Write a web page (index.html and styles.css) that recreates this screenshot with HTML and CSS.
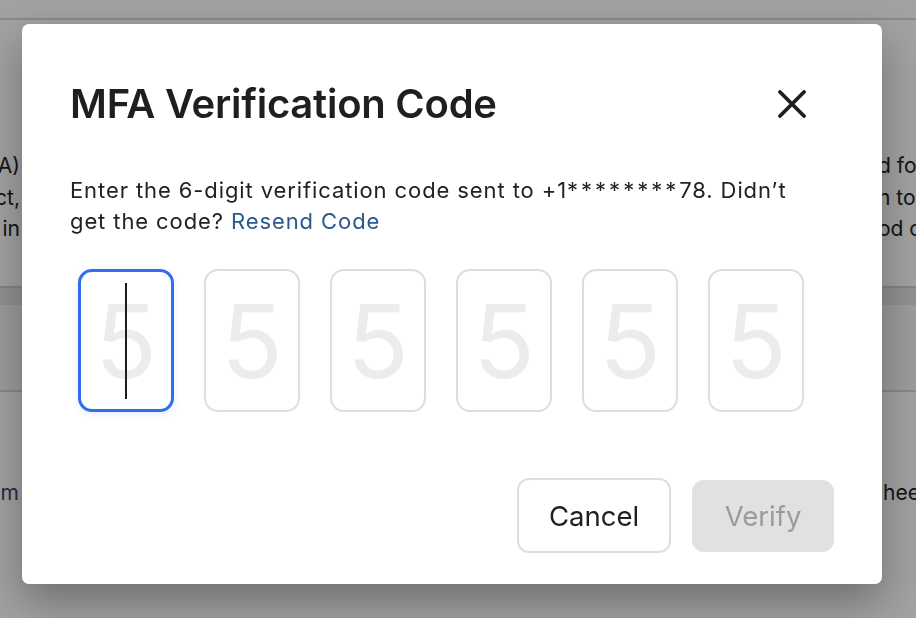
FILE: index.html
```html
<!DOCTYPE html>
<html lang="en">
<head>
<meta charset="utf-8">
<title>MFA Verification Code</title>
<link rel="stylesheet" href="styles.css">
</head>
<body>
<div class="page">
  <div class="bg-top"></div>
  <div class="bg-para">
    <div class="bg-line"><span class="bg-l">authentication (MFA)</span><span class="bg-r">d for</span></div>
    <div class="bg-line"><span class="bg-l">your account, product,</span><span class="bg-r">n to</span></div>
    <div class="bg-line"><span class="bg-l">sign in</span><span class="bg-r">od c</span></div>
  </div>
  <div class="bg-band"></div>
  <div class="bg-section"></div>
  <div class="bg-line bg-lower"><span class="bg-l bg-link">Learn more about the system</span><span class="bg-r">hee</span></div>
</div>

<div class="overlay">
  <div class="modal" role="dialog" aria-labelledby="mfa-title">
    <div class="modal-header">
      <h2 class="modal-title" id="mfa-title">MFA Verification Code</h2>
      <button class="close-btn" aria-label="Close">
        <svg width="28" height="28" viewBox="0 0 28 28" aria-hidden="true">
          <path d="M2 2 L26 26 M26 2 L2 26" stroke="#1f1f1f" stroke-width="3.8" stroke-linecap="round" fill="none"/>
        </svg>
      </button>
    </div>
    <p class="modal-text">Enter the 6-digit verification code sent to +1<span class="masked">********</span>78. Didn’t get the code? <a class="resend" href="#">Resend Code</a></p>
    <div class="code-row">
      <div class="code-box focused"><span class="ph">5</span><span class="caret"></span></div>
      <div class="code-box"><span class="ph">5</span></div>
      <div class="code-box"><span class="ph">5</span></div>
      <div class="code-box"><span class="ph">5</span></div>
      <div class="code-box"><span class="ph">5</span></div>
      <div class="code-box"><span class="ph">5</span></div>
    </div>
    <div class="actions">
      <button class="btn btn-cancel">Cancel</button>
      <button class="btn btn-verify" disabled>Verify</button>
    </div>
  </div>
</div>
</body>
</html>
```

FILE: styles.css
```css
* { box-sizing: border-box; }

html, body {
  margin: 0;
  padding: 0;
  width: 916px;
  height: 618px;
  overflow: hidden;
  background: #ffffff;
  font-family: Inter, "Noto Sans", "Liberation Sans", sans-serif;
  color: #222222;
}

/* background page */
.page {
  width: 916px;
  height: 618px;
  display: flex;
  flex-direction: column;
}

.bg-top {
  height: 20px;
  border-bottom: 2px solid #d9d9d9;
  flex: none;
}

.bg-para {
  margin-top: 130px;
  display: flex;
  flex-direction: column;
}

.bg-line {
  display: flex;
  justify-content: space-between;
  font-size: 21px;
  line-height: 31.5px;
  color: #222222;
  white-space: nowrap;
}

.bg-l {
  width: 20px;
  overflow: hidden;
  display: flex;
  justify-content: flex-end;
}

.bg-r {
  width: 38px;
  overflow: hidden;
}

.bg-band {
  margin-top: 41px;
  height: 19px;
  border-top: 2px solid #d2d2d4;
  background: #e4e5e9;
  flex: none;
}

.bg-section {
  height: 87px;
  border-bottom: 2px solid #d6d6d8;
  background: #f7f7f7;
  flex: none;
}

.bg-lower {
  margin-top: 85px;
}

.bg-lower .bg-l { width: 19px; }
.bg-lower .bg-r { width: 33px; }

.bg-link { color: #34477a; }

/* overlay + modal */
.overlay {
  position: fixed;
  inset: 0;
  background: rgba(0, 0, 0, 0.37);
  display: flex;
  align-items: flex-start;
  justify-content: flex-start;
  padding: 24px 34px 34px 22px;
}

.modal {
  width: 860px;
  height: 560px;
  background: #ffffff;
  border-radius: 7px;
  box-shadow: 0 18px 44px rgba(0, 0, 0, 0.32);
  padding: 56px 48px 31px 48px;
  display: flex;
  flex-direction: column;
}

.modal-header {
  display: flex;
  align-items: center;
  justify-content: space-between;
  height: 48px;
}

.modal-title {
  margin: 0;
  font-size: 40px;
  line-height: 48px;
  font-weight: 600;
  letter-spacing: -0.25px;
  color: #1f1f1f;
}

.close-btn {
  width: 44px;
  height: 44px;
  margin-right: 20px;
  border: 0;
  background: transparent;
  padding: 0;
  display: flex;
  align-items: center;
  justify-content: center;
  cursor: pointer;
}

.modal-text {
  margin: 47px 0 0 0;
  max-width: 740px;
  font-size: 22px;
  letter-spacing: 0.9px;
  line-height: 31px;
  color: #222222;
}

.masked {
  letter-spacing: 3px;
}

.resend {
  color: #2c5a8c;
  text-decoration: none;
}

.code-row {
  margin: 32px 0 0 8px;
  display: flex;
  gap: 30px;
}

.code-box {
  position: relative;
  width: 96px;
  height: 143px;
  border: 2px solid #dedede;
  border-radius: 14px;
  display: flex;
  align-items: center;
  justify-content: center;
}

.code-box.focused {
  border: 3px solid #2f6ef0;
  box-shadow: 0 2px 6px rgba(47, 110, 240, 0.12);
}

.ph {
  font-size: 102px;
  line-height: 1;
  font-weight: 400;
  color: #ececec;
}

.caret {
  position: absolute;
  left: 50%;
  top: 11px;
  width: 2px;
  height: 116px;
  margin-left: -1px;
  background: #1c1c1c;
}

.actions {
  margin-top: auto;
  display: flex;
  justify-content: flex-end;
  align-items: center;
  gap: 21px;
}

.btn {
  font-family: Inter, "Noto Sans", "Liberation Sans", sans-serif;
  font-size: 27.5px;
  font-weight: 400;
  border-radius: 12px;
  padding: 0;
  display: flex;
  align-items: center;
  justify-content: center;
}

.btn-cancel {
  width: 154px;
  height: 75px;
  background: #ffffff;
  border: 2px solid #dedede;
  color: #1f1f1f;
}

.btn-verify {
  width: 142px;
  height: 72px;
  background: #e1e1e1;
  border: 0;
  color: #9b9b9b;
}
```
